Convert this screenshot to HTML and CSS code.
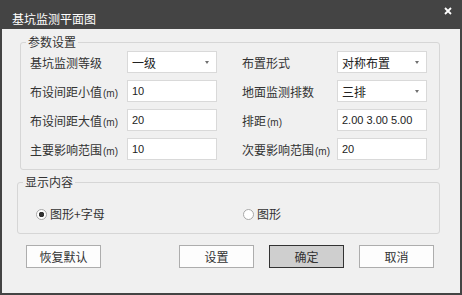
FILE: index.html
```html
<!DOCTYPE html>
<html lang="zh">
  <head>
    <meta charset="UTF-8" />
    <title>基坑监测平面图</title>
    <link rel="stylesheet" href="styles.css">
  </head>
  <body>
    <div class="window">
      <div class="titlebar">
        <span class="title">基坑监测平面图</span>
        <svg class="close" width="8" height="8" viewBox="0 0 8 8">
          <path d="M1 1 L7 7 M7 1 L1 7" stroke="#fff" stroke-width="1.8" />
        </svg>
      </div>

      <div class="content">
        <fieldset class="group group-params">
          <legend>参数设置</legend>
          <div class="form-grid">
            <label>基坑监测等级</label>
            <div class="field select">一级<i class="arrow"></i></div>
            <label>布置形式</label>
            <div class="field select">对称布置<i class="arrow"></i></div>

            <label>布设间距小值<span class="unit">(m)</span></label>
            <div class="field num">10</div>
            <label>地面监测排数</label>
            <div class="field select">三排<i class="arrow"></i></div>

            <label>布设间距大值<span class="unit">(m)</span></label>
            <div class="field num">20</div>
            <label>排距<span class="unit">(m)</span></label>
            <div class="field num">2.00 3.00 5.00</div>

            <label>主要影响范围<span class="unit">(m)</span></label>
            <div class="field num">10</div>
            <label>次要影响范围<span class="unit">(m)</span></label>
            <div class="field num">20</div>
          </div>
        </fieldset>

        <fieldset class="group group-display">
          <legend>显示内容</legend>
          <div class="radio-row">
            <label class="radio-item"><span class="radio checked"></span>图形+字母</label>
            <label class="radio-item"><span class="radio"></span>图形</label>
          </div>
        </fieldset>

        <div class="buttons">
          <button class="btn">恢复默认</button>
          <div class="btn-group">
            <button class="btn">设置</button>
            <button class="btn btn-primary">确定</button>
            <button class="btn">取消</button>
          </div>
        </div>
      </div>
    </div>
  </body>
</html>
```

FILE: styles.css
```css
body {
  margin: 0;
  padding: 0;
  font-family: "Noto Sans CJK SC", "Liberation Sans", sans-serif;
  font-size: 12px;
  color: #333;
}

.window {
  width: 462px;
  height: 295px;
  box-sizing: border-box;
  background-color: #444;
  padding: 0 2px 2px;
  display: flex;
  flex-direction: column;
}

.titlebar {
  height: 29px;
  margin: 0 -2px;
  display: flex;
  align-items: flex-start;
  padding-left: 12px;
}

.title {
  color: #fff;
  line-height: 17px;
  margin-top: 10px;
}

.close {
  margin-left: auto;
  margin-top: 7px;
  margin-right: 10px;
}

.content {
  flex: 1;
  background-color: #f0f0f0;
}

.group {
  margin: 0;
  padding: 0;
  min-inline-size: 0;
  border: 1px solid #d6d6d6;
  border-radius: 3px;
}

.group legend {
  margin-left: 5px;
  padding: 0 2px;
  line-height: 16px;
}

.group-params {
  margin: 5px 20px 0 18px;
}

.group-display {
  margin: 4px 20px 0 15px;
}

.form-grid {
  display: grid;
  grid-template-columns: 97px 115px 95px 90px;
  grid-auto-rows: 22px;
  row-gap: 7px;
  align-items: center;
  padding: 1px 0 9px 9px;
}

.form-grid label {
  white-space: nowrap;
}

.unit {
  font-family: "Liberation Sans", sans-serif;
  font-size: 10px;
  margin-left: 1px;
}

.field {
  width: 90px;
  height: 22px;
  box-sizing: border-box;
  border: 1px solid #d9d9d9;
  background-color: #fff;
  padding: 0 4px;
  display: flex;
  align-items: center;
  color: #222;
}

.num {
  font-family: "Liberation Sans", sans-serif;
  font-size: 11px;
}

.select {
  justify-content: space-between;
}

.arrow {
  width: 0;
  height: 0;
  border-left: 2.5px solid transparent;
  border-right: 2.5px solid transparent;
  border-top: 3px solid #707070;
  margin-right: 3px;
}

.radio-row {
  display: grid;
  grid-template-columns: 207px auto;
  padding: 15px 0 10px 18px;
  line-height: 18px;
}

.radio-item {
  display: flex;
  align-items: center;
  gap: 3px;
}

.radio {
  width: 11px;
  height: 11px;
  box-sizing: border-box;
  border-radius: 50%;
  border: 1px solid #a8a8a8;
  background-color: #fff;
}

.radio.checked {
  background: radial-gradient(circle, #333 0, #333 2.5px, #fff 3px);
}

.buttons {
  display: flex;
  justify-content: space-between;
  margin: 11px 26px 0 24px;
}

.btn-group {
  display: flex;
  gap: 15px;
}

.btn {
  width: 75px;
  height: 23px;
  font-family: inherit;
  font-size: 12px;
  color: #333;
  background-color: #fdfdfd;
  border: 1px solid #adadad;
  border-radius: 0;
  padding: 0;
}

.btn-primary {
  background-color: #cfcfcf;
  border-color: #333;
}
```
